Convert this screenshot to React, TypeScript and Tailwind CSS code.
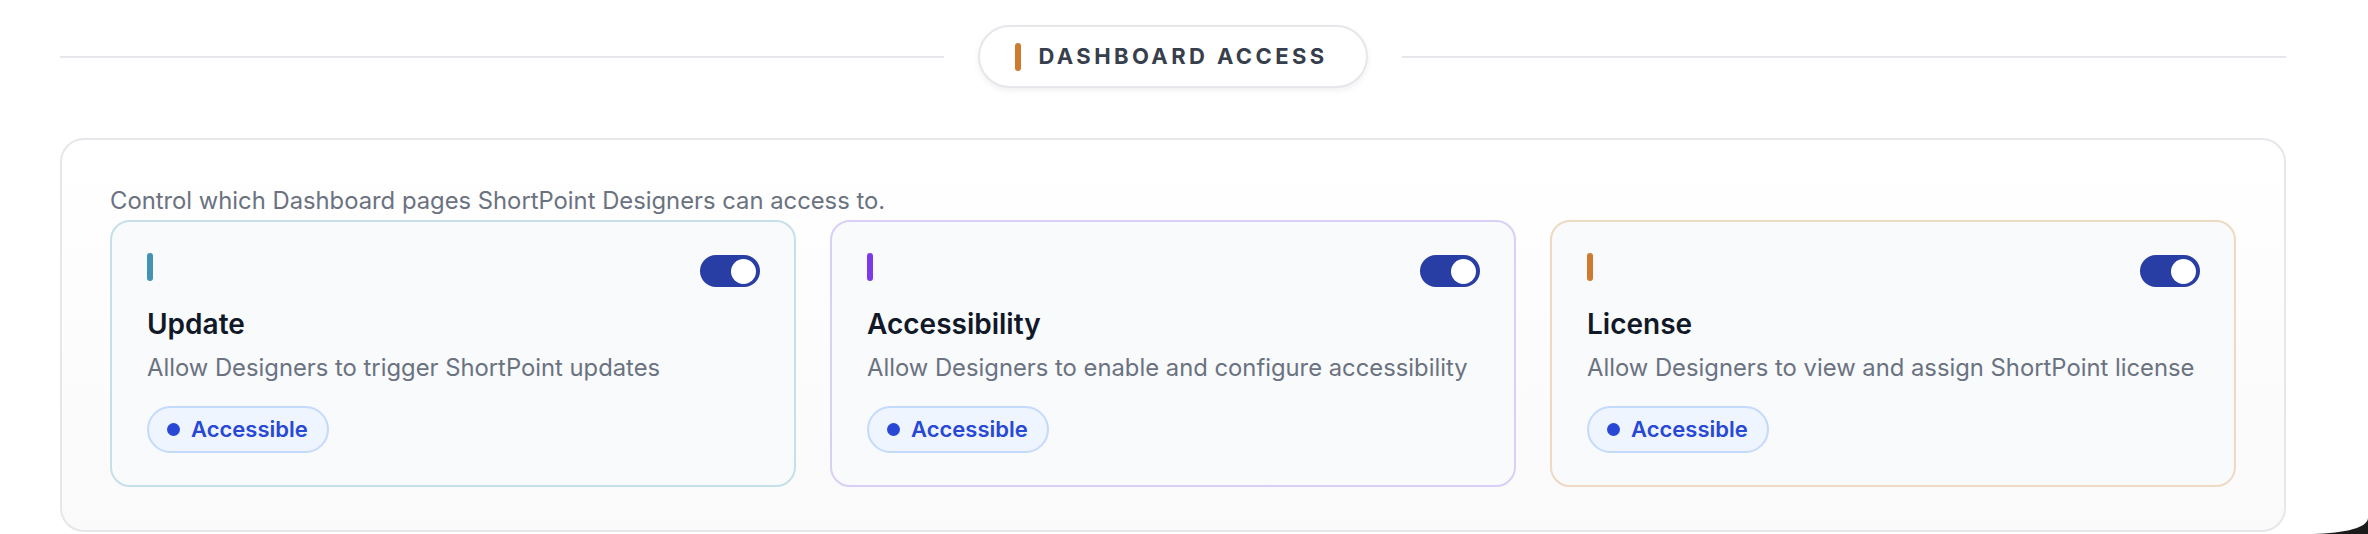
import React from 'react';

type Permission = {
  id: string;
  title: string;
  description: string;
  accent: string;
  border: string;
};

const PERMISSIONS: Permission[] = [
  {
    id: 'update',
    title: 'Update',
    description: 'Allow Designers to trigger ShortPoint updates',
    accent: 'bg-[#4394b3]',
    border: 'border-[#c6e0e9]',
  },
  {
    id: 'accessibility',
    title: 'Accessibility',
    description: 'Allow Designers to enable and configure accessibility',
    accent: 'bg-[#7c3aed]',
    border: 'border-[#dacff6]',
  },
  {
    id: 'license',
    title: 'License',
    description: 'Allow Designers to view and assign ShortPoint license',
    accent: 'bg-[#cf7b2f]',
    border: 'border-[#eed9c3]',
  },
];

function Toggle() {
  return (
    <div className="mt-[2px] flex h-[32px] w-[60px] items-center justify-end rounded-full bg-[#293ea4] p-[4px]">
      <div className="h-[25px] w-[25px] rounded-full bg-white" />
    </div>
  );
}

function PermissionCard({ item }: { item: Permission }) {
  return (
    <div className={`rounded-[20px] border-2 ${item.border} bg-[#f8fafc] pb-[32px] pl-[35px] pr-[34px] pt-[31px]`}>
      <div className="flex items-start justify-between">
        <div className={`h-[28px] w-[6px] rounded-full ${item.accent}`} />
        <Toggle />
      </div>
      <h3 className="mt-[19px] text-[28px] font-semibold leading-[36px] text-[#111827]">{item.title}</h3>
      <p className="mt-[11px] whitespace-nowrap text-[23.8px] leading-[30px] text-[#6b7280]">{item.description}</p>
      <div className="mt-[23px] inline-flex h-[47px] items-center gap-[11px] rounded-full border-2 border-[#c3dafc] bg-[#eff5ff] pl-[18px] pr-[19px]">
        <span className="h-[13px] w-[13px] rounded-full bg-[#2848d5]" />
        <span className="text-[22px] font-semibold text-[#2848d5]">Accessible</span>
      </div>
    </div>
  );
}

export default function App() {
  return (
    <div className="relative h-[534px] w-full overflow-hidden bg-white pl-[60px] pr-[82px] pt-[25px] font-['Inter',sans-serif]">
      {/* section header */}
      <div className="flex items-center gap-[34px]">
        <div className="h-[2px] flex-1 bg-[#e5e7eb]" />
        <div className="flex h-[63px] items-center gap-[17px] rounded-full border-2 border-[#e5e7eb] bg-white pl-[35px] pr-[38px] shadow-[0_3px_6px_rgba(0,0,0,0.06)]">
          <span className="h-[28px] w-[6px] rounded-full bg-[#cf7b2f]" />
          <span className="text-[22px] font-bold uppercase tracking-[3.4px] text-[#373e4c]">Dashboard Access</span>
        </div>
        <div className="h-[2px] flex-1 bg-[#e5e7eb]" />
      </div>

      {/* permissions panel */}
      <div className="mt-[50px] rounded-[24px] border-2 border-[#e5e7eb] bg-linear-to-b from-white to-[#fafafa] px-[48px] pb-[43px] pt-[46px]">
        <p className="mb-[4px] text-[23.8px] leading-[30px] text-[#6b7280]">
          Control which Dashboard pages ShortPoint Designers can access to.
        </p>
        <div className="grid grid-cols-3 gap-[34px]">
          {PERMISSIONS.map((p) => (
            <PermissionCard key={p.id} item={p} />
          ))}
        </div>
      </div>

      {/* screen corner */}
      <svg className="absolute bottom-0 right-0" width="60" height="16" viewBox="0 0 60 16">
        <path d="M0 16 C30 16 60 11 60 0 L60 16 Z" fill="#1b1b1b" />
      </svg>
    </div>
  );
}
